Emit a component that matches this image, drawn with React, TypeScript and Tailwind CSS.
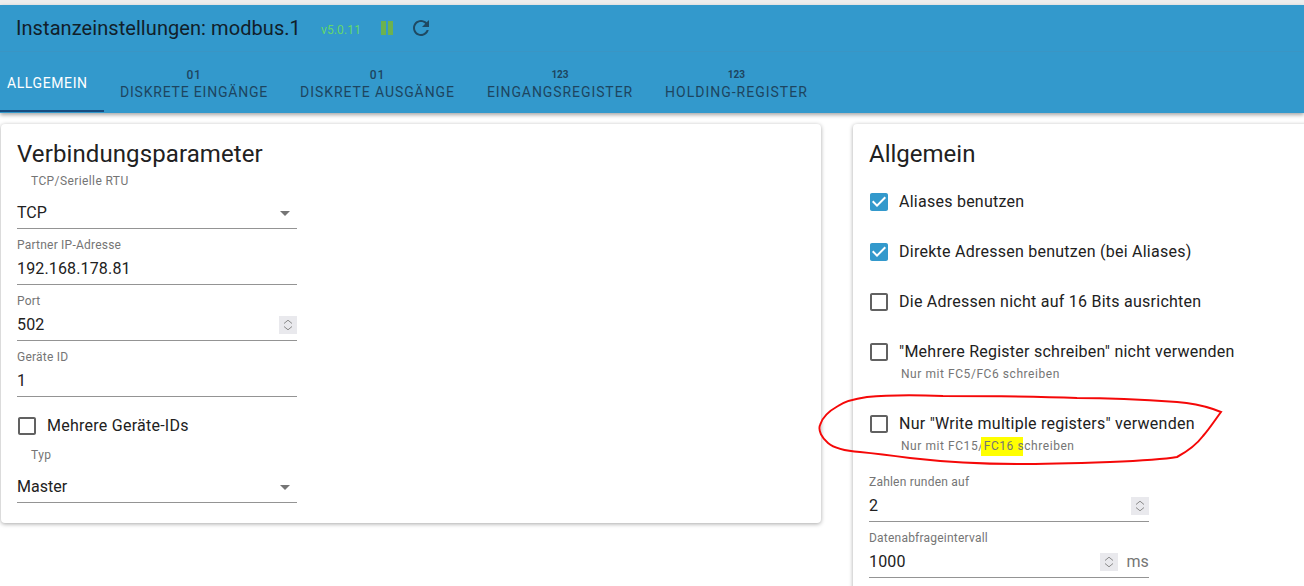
const CHECKED = 'M19 3H5c-1.11 0-2 .9-2 2v14c0 1.1.89 2 2 2h14c1.11 0 2-.9 2-2V5c0-1.1-.89-2-2-2zm-9 14l-5-5 1.41-1.41L10 14.17l7.59-7.59L19 8l-9 9z'
const UNCHECKED = 'M19 5v14H5V5h14m0-2H5c-1.1 0-2 .9-2 2v14c0 1.1.9 2 2 2h14c1.1 0 2-.9 2-2V5c0-1.1-.9-2-2-2z'

const TABS = [
  { icon: '01', label: 'DISKRETE EINGÄNGE', spacing: 'tracking-[0.8px]' },
  { icon: '01', label: 'DISKRETE AUSGÄNGE', spacing: 'tracking-[0.92px]' },
  { icon: '123', label: 'EINGANGSREGISTER', spacing: 'tracking-[0.92px]' },
  { icon: '123', label: 'HOLDING-REGISTER', spacing: 'tracking-[1px]' },
]

function Spinner() {
  return (
    <span className="flex h-[18px] w-[18px] shrink-0 items-center justify-center bg-[#e9e9ed]">
      <svg width="18" height="18" viewBox="0 0 18 18" fill="none" stroke="#8a8a8a" strokeWidth="1">
        <path d="M5 7.5 9 4.2l4 3.3M5 10.5l4 3.3 4-3.3" />
      </svg>
    </span>
  )
}

function Caret() {
  return (
    <svg width="24" height="24" viewBox="0 0 24 24" fill="#757575" className="shrink-0">
      <path d="M7 10l5 5 5-5z" />
    </svg>
  )
}

function Field({ label, value, spin, unit }: { label: string; value: string; spin?: boolean; unit?: string }) {
  return (
    <div className="h-[56px] w-[280px] pt-[8px]">
      <div className="h-[16px] text-[12px] leading-[16px] tracking-[0.22px] text-[#757575]">{label}</div>
      <div className="flex h-[32px] items-center justify-between border-b border-[#949494] text-[16px] tracking-[0.15px] text-[#212121]">
        <span>{value}</span>
        <span className="flex items-center">
          {spin && <Spinner />}
          {unit && <span className="ml-[8px] text-[16px] text-[#757575]">{unit}</span>}
        </span>
      </div>
    </div>
  )
}

function SelectField({ label, value }: { label: string; value: string }) {
  return (
    <div className="w-[280px]">
      <div className="h-[16px] pl-[14px] text-[12px] leading-[16px] tracking-[0.4px] text-[#757575]">{label}</div>
      <div className="mt-[8px] flex h-[32px] items-center justify-between border-b border-[#949494] text-[16px] text-[#212121]">
        <span>{value}</span>
        <Caret />
      </div>
    </div>
  )
}

function Check({ checked, label, hint, className = '' }: { checked?: boolean; label: string; hint?: React.ReactNode; className?: string }) {
  return (
    <div className={`-ml-[2px] flex items-start ${className}`}>
      <svg width="24" height="24" viewBox="0 0 24 24" fill={checked ? '#3399cc' : '#616161'} className="shrink-0">
        <path d={checked ? CHECKED : UNCHECKED} />
      </svg>
      <div className="ml-[8px]">
        <div className="h-[24px] text-[16px] leading-[24px] tracking-[0.25px] text-[#212121]">{label}</div>
        {hint && <div className="ml-[2px] mt-[2px] text-[12px] leading-[16px] tracking-[0.56px] text-[#757575]">{hint}</div>}
      </div>
    </div>
  )
}

export default function App() {
  return (
    <div className="relative h-[586px] w-[1304px] overflow-hidden bg-white font-['Roboto',sans-serif]">
      <div className="h-[5px] bg-[#ededed]" />
      <header className="relative z-10 h-[108px] bg-[#3399cc] shadow-[0_2px_4px_rgba(0,0,0,0.35)]">
        <div className="flex h-[47px] items-center border-b border-[#3a95c4] pl-[16px]">
          <h1 className="text-[20px] tracking-[0.07px] text-[#11202a]">Instanzeinstellungen: modbus.1</h1>
          <span className="ml-[20px] mt-[4px] text-[12px] tracking-[0.15px] text-[#63d86a]">v5.0.11</span>
          <svg width="14" height="14" viewBox="0 0 14 14" fill="#6cb24f" className="ml-[20px]">
            <path d="M0 0h5v14H0zM7 0h5v14H7z" />
          </svg>
          <svg width="24" height="24" viewBox="0 0 24 24" fill="#1f4a63" className="ml-[14px]">
            <path d="M17.65 6.35C16.2 4.9 14.21 4 12 4c-4.42 0-7.99 3.58-7.99 8s3.57 8 7.99 8c3.73 0 6.84-2.55 7.73-6h-2.08c-.82 2.33-3.04 4-5.65 4-3.31 0-6-2.69-6-6s2.69-6 6-6c1.66 0 3.14.69 4.22 1.78L13 11h7V4l-2.35 2.35z" />
          </svg>
        </div>
        <nav className="flex h-[60px] text-[14px]">
          <div className="flex h-full w-[104px] items-center border-b-2 border-[#164c80] pl-[7px] pt-[4px] tracking-[0.6px] text-white">ALLGEMEIN</div>
          {TABS.map((tab) => (
            <div key={tab.label} className={`flex h-full flex-col items-center px-[16px] pt-[15px] text-[#1d4560] ${tab.spacing}`}>
              <span className={tab.icon === '123' ? 'h-[16px] text-[10px] font-bold leading-[16px] tracking-normal' : 'h-[16px] text-[12px] font-medium leading-[16px]'}>{tab.icon}</span>
              <span className="leading-[18px]">{tab.label}</span>
            </div>
          ))}
        </nav>
      </header>

      <main className="flex items-start pl-[1px] pt-[11px]">
        <section className="h-[399px] w-[820px] shrink-0 rounded-[4px] bg-white px-[16px] pt-[16px] shadow-[0_1px_4px_rgba(0,0,0,0.35)]">
          <h2 className="h-[24px] text-[24px] leading-[28px] tracking-[0.1px] text-[#212121]">Verbindungsparameter</h2>
          <div className="mt-[9px]">
            <SelectField label="TCP/Serielle RTU" value="TCP" />
          </div>
          <Field label="Partner IP-Adresse" value="192.168.178.81" />
          <Field label="Port" value="502" spin />
          <Field label="Geräte ID" value="1" />
          <div className="mt-[17px]">
            <Check label="Mehrere Geräte-IDs" />
          </div>
          <div className="mt-[9px]">
            <SelectField label="Typ" value="Master" />
          </div>
        </section>

        <section className="ml-[32px] h-[480px] w-[460px] shrink-0 rounded-[4px] bg-white pl-[16px] pt-[16px] shadow-[0_1px_4px_rgba(0,0,0,0.35)]">
          <h2 className="h-[24px] text-[24px] leading-[28px] text-[#212121]">Allgemein</h2>
          <div className="mt-[26px] flex flex-col">
            <Check checked label="Aliases benutzen" className="h-[50px]" />
            <Check checked label="Direkte Adressen benutzen (bei Aliases)" className="h-[50px]" />
            <Check label="Die Adressen nicht auf 16 Bits ausrichten" className="h-[50px]" />
            <Check label={'"Mehrere Register schreiben" nicht verwenden'} hint="Nur mit FC5/FC6 schreiben" className="h-[72px]" />
            <Check
              label={'Nur "Write multiple registers" verwenden'}
              hint={
                <>
                  Nur mit FC15/
                  <span className="relative">
                    <span className="absolute -left-[3px] -top-[2px] h-[19px] w-[42px] bg-[#ffff00]" />
                    <span className="relative">FC16 s</span>
                  </span>
                  chreiben
                </>
              }
              className="h-[50px]"
            />
          </div>
          <div className="mt-[4px]">
            <Field label="Zahlen runden auf" value="2" spin />
            <Field label="Datenabfrageintervall" value="1000" spin unit="ms" />
          </div>
        </section>
      </main>

      {/* hand drawn marker around the option */}
      <svg width="1304" height="586" viewBox="0 0 1304 586" fill="none" className="pointer-events-none absolute left-0 top-0 z-20">
        <path
          d="M1213 409C1201 405 1190 403 1177 402C1135 399 1100 398 1077 398C1030 396 985 396 943 396C915 395 888 395 867 397C853 399 845 401 838 406C829 411 822 418 820 425C818 431 822 438 828 443C835 449 846 451 860 452C880 454 895 456 910 458C945 462 980 464 1017 464C1050 464 1080 463 1110 462C1135 461 1160 460 1177 457C1190 450 1197 444 1203 436C1210 428 1215 420 1221 412L1213 409"
          stroke="#f50808"
          strokeWidth="2"
        />
      </svg>
    </div>
  )
}
